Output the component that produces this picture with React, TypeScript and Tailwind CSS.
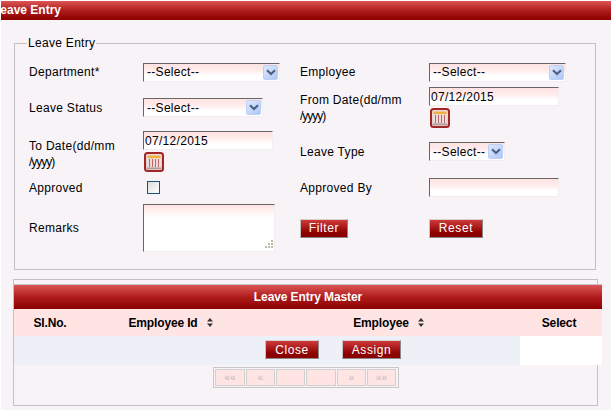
import React from "react";

const FIELD_BG = "bg-[linear-gradient(to_bottom,#ffe3e3_0%,#ffeaea_35%,#ffffff_70%,#ffffff_100%)]";
const INSET = "border border-t-[#666666] border-l-[#666666] border-r-[#f1eef2] border-b-[#f1eef2]";
const BAR = "bg-[linear-gradient(to_bottom,#dc5555_0%,#b01c1c_50%,#8b0000_100%)]";

function Chevron() {
  return (
    <svg width="10" height="7" viewBox="0 0 10 7">
      <path d="M1 1.2 L5 5 L9 1.2" fill="none" stroke="#4d6185" strokeWidth="2.2" />
    </svg>
  );
}

function Select({ w }: { w: string }) {
  return (
    <div className={`relative ${w} h-[19px] ${INSET} ${FIELD_BG} flex items-center pl-[3px]`}>
      <span className="leading-none">--Select--</span>
      <span className="absolute right-px top-px bottom-px w-[15px] rounded-[2px] border border-[#bcd0f5] bg-[linear-gradient(135deg,#dfe9fd,#aec6f6)] flex items-center justify-center">
        <Chevron />
      </span>
    </div>
  );
}

function TextInput({ value = "" }: { value?: string }) {
  return (
    <input
      readOnly
      value={value}
      className={`block w-[130px] h-[19px] px-px outline-none ${INSET} ${FIELD_BG}`}
    />
  );
}

function CalendarIcon() {
  return (
    <svg width="20" height="20" viewBox="0 0 20 20" className="block mt-[2px] ml-px">
      <defs>
        <linearGradient id="calBody" x1="0" y1="0" x2="0" y2="1">
          <stop offset="0" stopColor="#f3dede" />
          <stop offset="1" stopColor="#d8c4c4" />
        </linearGradient>
      </defs>
      <rect x="1" y="1" width="18" height="18" rx="2.5" fill="url(#calBody)" stroke="#a32626" strokeWidth="2" />
      <rect x="3.5" y="3.5" width="13" height="3" fill="#eeb045" />
      <rect x="3.5" y="6.5" width="13" height="9" fill="#f6ecec" />
      <path d="M5.5 7v8M8.5 7v8M11.5 7v8M14.5 7v8" stroke="#bb6a6a" strokeWidth="1.3" />
      <rect x="3" y="15.5" width="14" height="1.5" fill="#b09a9a" />
    </svg>
  );
}

function Btn({ label, w }: { label: string; w: string }) {
  return (
    <button
      className={`${w} h-[19px] border border-t-[#d8d0d0] border-l-[#c8c0c0] border-r-[#8a8a8a] border-b-[#8a8a8a] bg-[linear-gradient(to_bottom,#cf3a3a_0%,#8b0000_75%)] text-white leading-none tracking-[0.6px]`}
    >
      {label}
    </button>
  );
}

function SortIcon() {
  return (
    <svg width="6" height="9" viewBox="0 0 6 9" className="inline-block ml-[9px] align-[-0.5px]">
      <path d="M3 0 L6 3.5 H0 Z M3 9 L6 5.5 H0 Z" fill="#333333" />
    </svg>
  );
}

function PagerCell({ w, label }: { w: string; label?: string }) {
  return (
    <div className={`${w} h-[17px] bg-[#ffe4e4] border border-[#d0d0d0] flex items-center justify-center text-[#c0b8b8] text-[10px] leading-none`}>
      {label}
    </div>
  );
}

export default function App() {
  return (
    <div className="w-[611px] h-[410px] overflow-hidden bg-white pl-px pt-px font-['Liberation_Sans',Arial,sans-serif] text-[12px] text-black tracking-[0.3px]">
      <div className="h-full bg-[#f7f3f7] overflow-hidden">
        <div className={`h-[19px] ${BAR} text-white font-bold leading-[19px] -indent-[8px] tracking-normal`}>
          Leave Entry
        </div>

        <fieldset className="ml-[13px] mt-[16px] w-[582px] h-[234px] border border-[#c4c0c6] px-[14px]">
          <legend className="ml-[-2px] px-[1px] leading-[14px]">Leave Entry</legend>
          <div className="grid grid-cols-[114px_157px_129px_1fr] grid-rows-[28px_45px_43px_29px_52px] items-center mt-[7px]">
            <div className="mt-[2px]">Department*</div>
            <div className="mt-[2px]"><Select w="w-[137px]" /></div>
            <div className="mt-[2px]">Employee</div>
            <div className="mt-[2px]"><Select w="w-[137px]" /></div>

            <div>Leave Status</div>
            <Select w="w-[120px]" />
            <div className="leading-[16px]">From Date(dd/mm<br /><span className="tracking-[-1px]">/yyyy)</span></div>
            <div>
              <TextInput value="07/12/2015" />
              <CalendarIcon />
            </div>

            <div className="leading-[16px] pt-[4px]">To Date(dd/mm<br /><span className="tracking-[-1px]">/yyyy)</span></div>
            <div>
              <TextInput value="07/12/2015" />
              <CalendarIcon />
            </div>
            <div>Leave Type</div>
            <Select w="w-[76px]" />

            <div>Approved</div>
            <div className="pl-[4px]">
              <div className="w-[13px] h-[13px] border border-[#1c5180] bg-[linear-gradient(135deg,#dcdcdc,#ffffff)]" />
            </div>
            <div>Approved By</div>
            <TextInput />

            <div>Remarks</div>
            <div className="relative w-[132px] h-[48px]">
              <textarea readOnly className={`block w-full h-full resize-none outline-none ${INSET} bg-[linear-gradient(to_bottom,#ffe3e3_0%,#ffffff_28%)]`} />
              <svg width="10" height="10" viewBox="0 0 10 10" className="absolute right-[1px] bottom-[2px]">
                <path d="M7 0h2v2H7zM4 3h2v2H4zM7 3h2v2H7zM1 6h2v2H1zM4 6h2v2H4zM7 6h2v2H7z" fill="#bdb8a8" />
              </svg>
            </div>
            <div><Btn label="Filter" w="w-[48px]" /></div>
            <div><Btn label="Reset" w="w-[54px]" /></div>
          </div>
        </fieldset>

        <div className="ml-[12px] mt-[9px] w-[585px] h-[127px] border border-[#c4c0c6] pt-[4px]">
          <div className="w-[588px] border-t border-[#c4c0c6]">
            <div className={`h-[24px] ${BAR} text-white font-bold text-center leading-[24px] tracking-[-0.1px]`}>
              Leave Entry Master
            </div>
            <div className="grid grid-cols-[74px_171px_261px_82px] h-[27px] bg-[#ffe4e4] font-bold tracking-[-0.15px] items-center text-center">
              <div className="pr-[2px]">SI.No.</div>
              <div className="pr-[6px]">Employee Id<SortIcon /></div>
              <div className="pr-[2px]">Employee<SortIcon /></div>
              <div className="pr-[4px]">Select</div>
            </div>
            <div className="grid grid-cols-[506px_82px] h-[29px]">
              <div className="bg-[#eef0f8] flex items-center pl-[251px] pb-[2px] gap-[23px]">
                <Btn label="Close" w="w-[54px]" />
                <Btn label="Assign" w="w-[59px]" />
              </div>
              <div className="bg-white" />
            </div>
          </div>
          <div className="ml-[199px] mt-[2px] w-[186px] h-[21px] border border-[#c8c8c8] flex items-center gap-px px-px">
            <PagerCell w="w-[30px]" label="««" />
            <PagerCell w="w-[29px]" label="«" />
            <PagerCell w="w-[29px]" />
            <PagerCell w="w-[30px]" />
            <PagerCell w="w-[29px]" label="»" />
            <PagerCell w="w-[29px]" label="»»" />
          </div>
        </div>
      </div>
    </div>
  );
}
